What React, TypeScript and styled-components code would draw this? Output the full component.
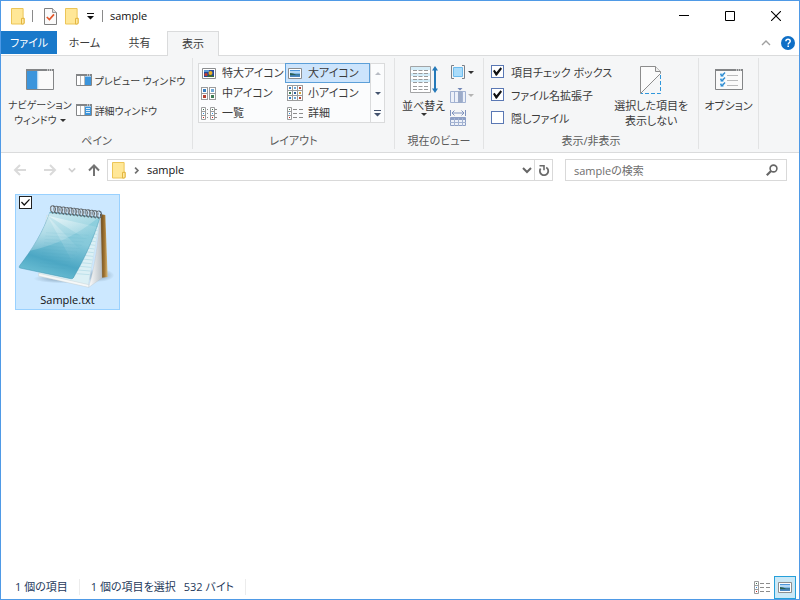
import React from "react";
import styled, { createGlobalStyle, css } from "styled-components";

const GlobalStyle = createGlobalStyle`
  *, *::before, *::after { box-sizing: border-box; }
  body { margin: 0; background: #fff; }
  body, button, input {
    font-family: "Open Sans", "Noto Sans CJK JP", sans-serif;
    font-size: 11px;
    font-feature-settings: "palt";
    color: #3b3b3b;
  }
  button { border: 0; padding: 0; background: none; }
  svg { display: block; flex: none; }
`;

const Window = styled.div`
  min-height: 100vh;
  display: flex;
  flex-direction: column;
  border: 1px solid #4f9ae6;
  background: #fff;
`;

/* ---------- title bar ---------- */
const TitleBar = styled.header`
  display: flex;
  align-items: center;
  gap: 11px;
  height: 30px;
  padding-left: 10px;
`;
const QuickAccess = styled.div<{ $gap: number }>`
  display: flex;
  align-items: center;
  gap: ${(p) => p.$gap}px;
`;
const QuickButton = styled.button`
  display: flex;
`;
const Divider = styled.span`
  width: 1px;
  height: 12px;
  background: #8a8a8a;
`;
const Title = styled.h1`
  margin: 0 auto 0 -4px;
  font-size: 11px;
  font-weight: 400;
  line-height: 16px;
  color: #111;
`;
const CaptionButtons = styled.div`
  display: flex;
`;
const CaptionButton = styled.button`
  width: 46px;
  height: 30px;
  display: grid;
  place-items: center;
`;

/* ---------- tabs ---------- */
const TabRow = styled.nav`
  display: flex;
  height: 24px;
  align-items: stretch;
`;
const Tab = styled.button<{ $kind?: "file" | "active" }>`
  min-width: 55px;
  padding: 0 7px;
  line-height: 22px;
  ${(p) =>
    p.$kind === "file" &&
    css`
      min-width: 56px;
      background: #1979ca;
      color: #fff;
      margin-bottom: 1px;
    `}
  ${(p) =>
    p.$kind === "active" &&
    css`
      position: relative;
      min-width: 52px;
      background: #f5f6f7;
      border: 1px solid #dadbdc;
      border-bottom: 0;
      margin-bottom: -1px;
    `}
`;
const TabTools = styled.div`
  margin-left: auto;
  padding-right: 4px;
  display: flex;
  align-items: center;
  gap: 10px;
`;

/* ---------- ribbon ---------- */
const Ribbon = styled.section`
  display: flex;
  padding: 2px 0 3px;
  background: #f5f6f7;
  border-top: 1px solid #dadbdc;
  border-bottom: 1px solid #dadbdc;
`;
const Group = styled.section<{ $basis: number }>`
  flex: 0 0 ${(p) => p.$basis}px;
  display: flex;
  flex-direction: column;
  border-right: 1px solid #e2e3e4;
`;
const GroupBody = styled.div<{ $inset?: number }>`
  display: flex;
  justify-content: ${(p) => (p.$inset ? "flex-start" : "center")};
  padding-left: ${(p) => p.$inset ?? 0}px;
  height: 75px;
`;
const GroupName = styled.h2`
  margin: 0;
  height: 16px;
  font-size: 11px;
  font-weight: 400;
  line-height: 16px;
  text-align: center;
  color: #5a5a5a;
`;
const BigButton = styled.button<{ $small?: boolean }>`
  display: flex;
  flex-direction: column;
  align-items: center;
  width: max-content;
  padding: 7px 0 0;
  font-size: ${(p) => (p.$small ? 10 : 11)}px;
  line-height: 15px;
  white-space: nowrap;
`;
const BigIcon = styled.span`
  height: 33px;
  display: flex;
  align-items: center;
  padding-bottom: 4px;
`;
const WithArrow = styled.span`
  display: flex;
  align-items: center;
  gap: 3px;
`;
const PaneColumn = styled.div`
  display: flex;
  flex-direction: column;
  gap: 10px;
  padding: 12px 0 0 4px;
`;
const PaneButton = styled.button`
  display: flex;
  align-items: center;
  gap: 3px;
  height: 20px;
  font-size: 10px;
  white-space: nowrap;
`;

const Gallery = styled.div`
  display: grid;
  grid-template-columns: 86px 85px 14px;
  margin-top: 5px;
  height: 60px;
  border: 1px solid #dadbdc;
  background: #fbfcfd;
`;
const GalleryColumn = styled.div`
  display: flex;
  flex-direction: column;
  margin-top: -1px;
`;
const GalleryItem = styled.button<{ $selected?: boolean }>`
  display: flex;
  align-items: center;
  gap: 5px;
  height: 20px;
  padding: 0 0 0 2px;
  line-height: 18px;
  white-space: nowrap;
  ${(p) =>
    p.$selected &&
    css`
      background: #cce4fc;
      outline: 1px solid #5c9fd8;
      outline-offset: -1px;
    `}
`;
const GalleryScroll = styled.div`
  display: grid;
  grid-template-rows: repeat(3, 1fr);
  border-left: 1px solid #dadbdc;
`;
const ScrollButton = styled.button`
  display: grid;
  place-items: center;
`;

const ViewTools = styled.div`
  display: flex;
  flex-direction: column;
  gap: 7px;
  padding: 6px 0 0 5px;
`;
const ToolButton = styled.button`
  display: flex;
  align-items: center;
  gap: 2px;
  height: 16px;
`;

const CheckList = styled.div`
  display: flex;
  flex-direction: column;
  padding: 2px 2px 0 0;
`;
const CheckLabel = styled.label`
  display: flex;
  align-items: center;
  gap: 7px;
  height: 23px;
  white-space: nowrap;
`;
const CheckBox = styled.input<{ $dark?: boolean }>`
  appearance: none;
  display: grid;
  place-items: center;
  width: 13px;
  height: 13px;
  margin: 0;
  border: 1px solid ${(p) => (p.$dark ? "#222" : "#5a78b4")};
  background: #fff;
  &:checked::before {
    content: "";
    width: 9px;
    height: 9px;
    background: #111;
    clip-path: ${(p) =>
      p.$dark
        ? "polygon(0 50%, 10% 40%, 36% 68%, 90% 10%, 100% 20%, 36% 88%)"
        : "polygon(0 45%, 18% 30%, 38% 58%, 84% 4%, 100% 20%, 42% 96%, 32% 96%)"};
  }
`;

/* ---------- address row ---------- */
const AddressRow = styled.div`
  display: flex;
  align-items: center;
  height: 34px;
  padding: 0 12px;
`;
const NavButton = styled.button<{ $space: number }>`
  display: flex;
  margin-right: ${(p) => p.$space}px;
`;
const AddressBox = styled.div`
  flex: 2;
  display: flex;
  align-items: center;
  height: 22px;
  border: 1px solid #d9d9d9;
  margin-right: 12px;
  padding-left: 4px;
`;
const Crumb = styled.button`
  display: flex;
  align-items: center;
  gap: 7px;
  margin-right: auto;
  line-height: 18px;
  color: #111;
`;
const DropButton = styled.button`
  width: 15px;
  display: grid;
  place-items: center;
`;
const Refresh = styled.button`
  width: 18px;
  align-self: stretch;
  display: grid;
  place-items: center;
  border-left: 1px solid #d9d9d9;
`;
const SearchBox = styled.label`
  flex: 1;
  display: flex;
  align-items: center;
  height: 22px;
  border: 1px solid #d9d9d9;
  svg {
    margin-right: 8px;
  }
`;
const SearchInput = styled.input`
  flex: 1;
  min-width: 0;
  border: 0;
  padding: 0 0 0 8px;
  outline: 0;
  background: none;
  &::placeholder {
    color: #6d6d6d;
    opacity: 1;
  }
`;

/* ---------- files ---------- */
const Files = styled.main`
  flex: 1;
  display: flex;
  flex-wrap: wrap;
  align-content: flex-start;
  padding: 7px 14px;
`;
const FileTile = styled.label`
  position: relative;
  display: flex;
  flex-direction: column;
  align-items: center;
  width: 105px;
  padding-top: 7px;
  border: 1px solid #99d1ff;
  background: #cce8ff;
`;
const TileCheck = styled.span`
  position: absolute;
  left: 3px;
  top: 1px;
`;
const FileName = styled.span`
  line-height: 19px;
  color: #111;
`;

/* ---------- status bar ---------- */
const StatusBar = styled.footer`
  display: flex;
  align-items: center;
  height: 24px;
  padding: 0 3px 0 14px;
  color: #1e395b;
`;
const StatusText = styled.span`
  display: flex;
  gap: 8px;
  line-height: 16px;
  padding-right: 11px;
  margin-right: 11px;
  border-right: 1px solid #ececec;
`;
const ViewSwitch = styled.div`
  display: flex;
  align-items: center;
  gap: 1px;
  margin-left: auto;
`;
const ViewButton = styled.button<{ $on?: boolean }>`
  display: grid;
  place-items: center;
  width: 22px;
  height: 23px;
  ${(p) =>
    p.$on &&
    css`
      border: 1px solid #26a0da;
      background: #cbe8f6;
    `}
`;

/* ---------- icons ---------- */
const FolderIcon = () => (
  <svg width="14" height="17" viewBox="0 0 14 17">
    <path d="M.5.5h11.6v9.6h1v5.4l-1 .5H.5z" fill="#ffe797" stroke="#ecc557" />
    <path d="M10.5 16v-5.6h2.6v5L12 16z" fill="#ffe9a2" stroke="#e3b640" />
  </svg>
);

const PropertiesIcon = () => (
  <svg width="13" height="17" viewBox="0 0 13 17">
    <path d="M.5.5h8l4 4v12H.5z" fill="#fafafa" stroke="#808080" />
    <path d="M8.5.5v4h4" fill="#ddd" stroke="#999" />
    <path d="M2.8 9l2.6 2.6L10 6.4" fill="none" stroke="#e2572b" strokeWidth="1.7" />
  </svg>
);

const Triangle = ({ color = "#333", up = false }: { color?: string; up?: boolean }) => (
  <svg width="6" height="3" viewBox="0 0 6 3">
    <path d={up ? "M0 3h6L3 0z" : "M0 0h6L3 3z"} fill={color} />
  </svg>
);

const BarTriangle = ({ color = "#333" }: { color?: string }) => (
  <svg width="7" height="7" viewBox="0 0 7 7">
    <path d="M0 0h7v1H0zM0 3h7L3.5 6.5z" fill={color} />
  </svg>
);

const PaneFrame = ({ children }: { children: React.ReactNode }) => (
  <svg width="28" height="21" viewBox="0 0 28 21">
    <path d="M.5.5h27v20H.5z" fill="#fafafa" stroke="#838587" />
    <path d="M0 0h28v2H0z" fill="#838587" />
    <path d="M21 1h1M23 1h1M25 1h1" stroke="#fff" />
    {children}
  </svg>
);

const SmallPane = ({ details }: { details?: boolean }) => (
  <svg width="16" height="12" viewBox="0 0 16 12">
    <path d="M.5.5h15v11H.5z" fill="#fff" stroke="#838587" />
    <path d="M0 0h16v2H0z" fill="#838587" />
    <path d="M11 1h1M13 1h1" stroke="#fff" />
    <path d="M4.5 2v9M8.5 2v9" stroke="#b9babb" />
    <path d="M9 2.5h6v8.5H9z" fill="#3c95dc" />
    {details && <path d="M10 4.5h4M10 6.5h4M10 8.5h4" stroke="#d6ebfb" />}
  </svg>
);

const PictureIcon = ({ scene }: { scene: "flowers" | "lake" }) => (
  <svg width="16" height="13" viewBox="0 0 16 13">
    <path d="M1.5 1.5h13v10h-13z" fill="#fff" stroke="#8b8d8f" />
    {scene === "flowers" ? (
      <>
        <path d="M3 3h10v7H3z" fill="#25489c" />
        <path d="M3 3h5v2H3z" fill="#5b9ad6" />
        <circle cx="5" cy="7.5" r="1.6" fill="#c8402c" />
        <circle cx="9.5" cy="6" r="2" fill="#eab021" />
        <path d="M6.500 8.500l3-.5L13 9v1H6.500z" fill="#3d6b32" />
      </>
    ) : (
      <>
        <path d="M3 3h10v7H3z" fill="#4f97dc" />
        <path d="M3 4h10v2.500H3z" fill="#b5d8f4" />
        <path d="M3 6l3 .5 3 1h4v1H3z" fill="#2b5f52" />
        <path d="M3 8.500h10V10H3z" fill="#4a86c2" />
      </>
    )}
  </svg>
);

const CellsIcon = ({ count }: { count: 2 | 3 }) => {
  const colours = ["#397fc2", "#70a9d8", "#b44232", "#3f7c55", "#2f609d", "#d7a334"];
  const w = count === 2 ? 7 : 5;
  const h = count === 2 ? 6 : 5;
  const tall = count === 2 ? 13 : 16;
  const inset = count === 2 ? 2 : 2;
  const cells = Array.from({ length: count * count }, (_, i) => i);
  return (
    <svg width="16" height={tall} viewBox={`0 0 16 ${tall}`}>
      {cells.map((i) => {
        const x = (i % count) * (w + (count === 2 ? 1 : 0));
        const y = Math.floor(i / count) * h;
        return (
          <g key={i}>
            <rect x={x + 0.5} y={y + 0.5} width={count === 2 ? 6 : 5} height={h} fill="#fff" stroke="#9b9c9d" />
            <rect x={x + inset} y={y + inset} width={count === 2 ? 3 : 2} height={count === 2 ? 3 : 2} fill={colours[i % 6]} />
          </g>
        );
      })}
    </svg>
  );
};

const ListIcon = ({ details }: { details?: boolean }) => (
  <svg width="16" height="13" viewBox="0 0 16 13">
    <path d="M.5.5h4v12h-4zM0 4.5h5M0 8.5h5" fill="#fff" stroke="#9b9c9d" />
    <path d="M2 2h1v1H2z" fill="#3f6f4f" />
    <path d="M2 6h1v1H2z" fill="#2f8fe0" />
    <path d="M2 10h1v1H2z" fill="#c5221f" />
    {details ? (
      <path d="M6 2.5h4M6 6.5h4M6 10.5h4M12 2.5h4M12 6.5h4M12 10.5h4" stroke="#8c8c8c" />
    ) : (
      <>
        <path d="M6 2.5h1M6 6.5h1M6 10.5h1M14 2.5h2M14 6.5h2M14 10.5h2" stroke="#8c8c8c" />
        <path d="M9.5.5h4v12h-4zM9 4.5h5M9 8.5h5" fill="#fff" stroke="#9b9c9d" />
        <path d="M11 2h1v1h-1z" fill="#3f6f4f" />
        <path d="M11 6h1v1h-1z" fill="#2f8fe0" />
        <path d="M11 10h1v1h-1z" fill="#c5221f" />
      </>
    )}
  </svg>
);

const SortIcon = () => (
  <svg width="28" height="27" viewBox="0 0 28 27">
    <path d="M.5.5h20v26H.5z" fill="#fff" stroke="#a3a4a5" />
    <path d="M1 1h19v3H1zM1 7h19v3H1zM1 13h19v3H1z" fill="#d4edf9" />
    <path
      d="M3 4.5h15M3 7.5h15M3 10.500h15M3 13.5h15M3 16.500h15M3 20.500h15M3 23.500h15"
      stroke="#9a9b9c"
      strokeDasharray="4 1.5"
    />
    <path d="M25 3v21" stroke="#2479b9" strokeWidth="2" />
    <path d="M22 4.5L25 0l3 4.5zM22 22.5L25 27l3-4.5z" fill="#2479b9" />
  </svg>
);

const GroupByIcon = () => (
  <svg width="16" height="14" viewBox="0 0 16 14">
    <path d="M4 .5H1.5v13H4M12 .5h2.5v13H12" fill="none" stroke="#7b8088" />
    <path d="M3.5 2.5h9v9h-9z" fill="#a9dcfb" stroke="#6dbbed" />
  </svg>
);

const AddColumnIcon = () => (
  <svg width="16" height="16" viewBox="0 0 16 16">
    <path d="M.5 4.5h15v11H.5z" fill="#edf1f9" stroke="#a3b3d2" />
    <path d="M4.5 4.5v11M12.5 4.5v11" stroke="#a3b3d2" />
    <path d="M8 4h4v12H8z" fill="#9dacc9" />
    <path d="M7.5 1h5L10 3.5z" fill="#7187b6" />
  </svg>
);

const FitColumnsIcon = () => (
  <svg width="16" height="16" viewBox="0 0 16 16">
    <path d="M.5 0v6M15.5 0v6M2 3h12M4.5.5L2 3l2.5 2.5M11.5.5L14 3l-2.5 2.5" fill="none" stroke="#7e92bd" />
    <path d="M.5 7.5h15v8H.5z" fill="#edf1f9" stroke="#8d9fc5" />
    <path d="M0 9h16" stroke="#8d9fc5" strokeWidth="2" />
    <path d="M4.5 8v8M8.5 8v8M12.5 8v8M0 12.5h16" stroke="#a3b3d2" />
  </svg>
);

const HideIcon = () => (
  <svg width="22" height="28" viewBox="0 0 22 28">
    <path d="M.5 27.5V.5h15l5 5v2z" fill="#fbfbfb" stroke="#8c8c8c" />
    <path d="M15.5.5v5h5" fill="#eee" stroke="#8c8c8c" />
    <path d="M20.5 9v18.5H1" fill="none" stroke="#2f97dc" strokeDasharray="4 2" />
  </svg>
);

const OptionRows = () => (
  <>
    {[5, 10, 15].map((y) => (
      <g key={y}>
        <path d={`M5 ${y - 1}h4v4H5z`} fill="#c5e4f8" />
        <path d={`M5.5 ${y}l1.5 2 3-3.5`} fill="none" stroke="#2f8bd0" strokeWidth="1.3" />
        <path d={`M12 ${y + 1.5}h11`} stroke="#b9babb" />
      </g>
    ))}
  </>
);

const Arrow = ({ turn, color }: { turn: "left" | "right" | "up"; color: string }) => {
  const paths = {
    left: "M13 7H2M7 2L2 7l5 5",
    right: "M1 7h11M7 2l5 5-5 5",
    up: "M7 13V2.5M2 7.5l5-5 5 5",
  };
  return (
    <svg width="14" height="14" viewBox="0 0 14 14">
      <path d={paths[turn]} fill="none" stroke={color} strokeWidth="2" />
    </svg>
  );
};

const Chevron = ({ d, color, size, weight }: { d: string; color: string; size: number; weight: number }) => (
  <svg width={size} height={size} viewBox="0 0 10 10">
    <path d={d} fill="none" stroke={color} strokeWidth={weight} />
  </svg>
);

const RefreshIcon = () => (
  <svg width="12" height="13" viewBox="0 0 12 13">
    <path d="M8.2 3.4A4.200 4.200 0 1 1 2.600 4.600" fill="none" stroke="#6b6b6b" strokeWidth="1.8" />
    <path d="M1.500 1.800H6v4.500" fill="none" stroke="#6b6b6b" strokeWidth="1.6" />
  </svg>
);

const SearchIcon = () => (
  <svg width="12" height="12" viewBox="0 0 12 12">
    <circle cx="7.5" cy="4.5" r="3.4" fill="none" stroke="#666" strokeWidth="1.6" />
    <path d="M5 7L.8 11.2" stroke="#666" strokeWidth="2.2" />
  </svg>
);

const HelpIcon = () => (
  <svg width="14" height="14" viewBox="0 0 14 14">
    <circle cx="7" cy="7" r="7" fill="#0f6fc6" />
    <path d="M4.9 5.3c0-1.4 1-2 2.1-2 1.2 0 2.2.7 2.2 1.9 0 1.5-2 1.6-2 3.2" fill="none" stroke="#fff" strokeWidth="1.5" />
    <path d="M6.4 9.6H8v1.5H6.4z" fill="#fff" />
  </svg>
);

const NotepadIcon = () => {
  const rings = Array.from({ length: 14 }, (_, i) => i);
  const lines = Array.from({ length: 14 }, (_, i) => i);
  return (
    <svg width="100" height="88" viewBox="54 50 300 264">
      <defs>
        <linearGradient id="cover" x1="0.7" y1="0" x2="0.35" y2="1">
          <stop offset="0" stopColor="#8fd0de" />
          <stop offset="0.4" stopColor="#86c9da" />
          <stop offset="0.75" stopColor="#4ca7c4" />
          <stop offset="1" stopColor="#6dbfd4" />
        </linearGradient>
        <linearGradient id="shine" x1="0" y1="0" x2="0.8" y2="1">
          <stop offset="0" stopColor="#fff" stopOpacity="0.9" />
          <stop offset="0.9" stopColor="#fff" stopOpacity="0" />
        </linearGradient>
        <linearGradient id="board" x1="0" y1="0" x2="1" y2="0">
          <stop offset="0" stopColor="#5d3f15" />
          <stop offset="0.6" stopColor="#a47835" />
          <stop offset="1" stopColor="#d9bb7b" />
        </linearGradient>
        <linearGradient id="edge" x1="0" y1="0" x2="1" y2="0">
          <stop offset="0" stopColor="#fff" />
          <stop offset="1" stopColor="#b9c0c5" />
        </linearGradient>
        <radialGradient id="shade">
          <stop offset="0" stopColor="#4c6880" stopOpacity="0.6" />
          <stop offset="1" stopColor="#4c6880" stopOpacity="0" />
        </radialGradient>
      </defs>
      <ellipse cx="295" cy="270" rx="48" ry="20" fill="url(#shade)" />
      <ellipse cx="190" cy="280" rx="90" ry="14" fill="url(#shade)" />
      <path d="M300 86l16 3 7 186-18 2z" fill="url(#board)" />
      <path d="M140 90l162 4-38 210-148-32z" fill="#dcf0f5" stroke="#c6d2d7" />
      {lines.map((i) => (
        <path key={i} d={`M${282 - i * 4} ${122 + i * 11}l${13 + i * 2} 3`} stroke="#9fd0de" strokeWidth="1.5" />
      ))}
      <path d="M302 92l4 186-40 28c18-60 28-130 34-208z" fill="url(#edge)" stroke="#b8bfc3" />
      <path d="M116 264l150 34v8l-150-34z" fill="#f6f8f8" stroke="#bcc5c9" />
      <path d="M150 80l150 16c-20 66-46 122-78 178-2 5-5 7-10 6L60 248c-3-1-3-3-1-7 38-50 70-100 91-161z" fill="url(#cover)" stroke="#3e95b2" strokeWidth="1.5" />
      <path d="M146 92l148 34-22 44z" fill="url(#shine)" opacity="0.6" />
      <path d="M144 94l108 112-28 36z" fill="url(#shine)" opacity="0.35" />
      <path d="M148 84c-14 42-34 78-58 112 60-12 120-36 180-80l24-18z" fill="url(#shine)" opacity="0.75" />
      {lines.slice(0, 11).map((i) => (
        <path key={i} d={`M${138 - i * 2} ${142 + i * 10}l${128 - i * 5} 8`} stroke="#3f9db8" opacity="0.2" />
      ))}
      {rings.map((i) => (
        <g key={i} fill="none">
          <path d={`M${160 + i * 10.600} ${84 + i * 1.200}c-11-7-11-24 0-22 8 2 8 12 3 20`} stroke="#5f6970" strokeWidth="4" />
          <path d={`M${156 + i * 10.600} ${78 + i * 1.200}c-5-7-3-15 3-15`} stroke="#e8edf0" strokeWidth="2" />
        </g>
      ))}
    </svg>
  );
};

const CheckOption = ({ text, on }: { text: string; on?: boolean }) => (
  <CheckLabel>
    <CheckBox type="checkbox" defaultChecked={on} />
    {text}
  </CheckLabel>
);

export default function App() {
  return (
    <Window>
      <GlobalStyle />
      <TitleBar>
        <QuickAccess $gap={7}>
          <FolderIcon />
          <Divider />
        </QuickAccess>
        <QuickAccess $gap={8}>
          <QuickButton aria-label="プロパティ"><PropertiesIcon /></QuickButton>
          <QuickButton aria-label="新しいフォルダー"><FolderIcon /></QuickButton>
          <QuickButton aria-label="クイック アクセス"><BarTriangle color="#111" /></QuickButton>
          <Divider />
        </QuickAccess>
        <Title>sample</Title>
        <CaptionButtons>
          <CaptionButton aria-label="最小化">
            <svg width="10" height="10" viewBox="0 0 10 10"><path d="M0 4.5h10" stroke="#000" /></svg>
          </CaptionButton>
          <CaptionButton aria-label="最大化">
            <svg width="10" height="10" viewBox="0 0 10 10"><path d="M.5.5h9v9h-9z" fill="none" stroke="#000" /></svg>
          </CaptionButton>
          <CaptionButton aria-label="閉じる">
            <svg width="10" height="10" viewBox="0 0 10 10"><path d="M0 0l10 10M10 0L0 10" stroke="#000" strokeWidth="1.1" /></svg>
          </CaptionButton>
        </CaptionButtons>
      </TitleBar>

      <TabRow>
        <Tab $kind="file">ファイル</Tab>
        <Tab>ホーム</Tab>
        <Tab>共有</Tab>
        <Tab $kind="active">表示</Tab>
        <TabTools>
          <QuickButton aria-label="リボンの最小化">
            <Chevron d="M1 7l4-4 4 4" color="#a0a0a0" size={10} weight={1.4} />
          </QuickButton>
          <QuickButton aria-label="ヘルプ"><HelpIcon /></QuickButton>
        </TabTools>
      </TabRow>

      <Ribbon>
        <Group $basis={192}>
          <GroupBody $inset={7}>
            <BigButton $small>
              <BigIcon>
                <PaneFrame><path d="M1 2h10.5v18H1z" fill="#3c95dc" /><path d="M12 2v18" stroke="#d7e9f7" /></PaneFrame>
              </BigIcon>
              <span>ナビゲーション</span>
              <WithArrow>ウィンドウ<Triangle /></WithArrow>
            </BigButton>
            <PaneColumn>
              <PaneButton><SmallPane />プレビュー ウィンドウ</PaneButton>
              <PaneButton><SmallPane details />詳細ウィンドウ</PaneButton>
            </PaneColumn>
          </GroupBody>
          <GroupName>ペイン</GroupName>
        </Group>

        <Group $basis={202}>
          <GroupBody $inset={5}>
            <Gallery>
              <GalleryColumn>
                <GalleryItem><PictureIcon scene="flowers" />特大アイコン</GalleryItem>
                <GalleryItem><CellsIcon count={2} />中アイコン</GalleryItem>
                <GalleryItem><ListIcon />一覧</GalleryItem>
              </GalleryColumn>
              <GalleryColumn>
                <GalleryItem $selected><PictureIcon scene="lake" />大アイコン</GalleryItem>
                <GalleryItem><CellsIcon count={3} />小アイコン</GalleryItem>
                <GalleryItem><ListIcon details />詳細</GalleryItem>
              </GalleryColumn>
              <GalleryScroll>
                <ScrollButton aria-label="上へ"><Triangle up color="#b8bcc4" /></ScrollButton>
                <ScrollButton aria-label="下へ"><Triangle color="#44546f" /></ScrollButton>
                <ScrollButton aria-label="その他"><BarTriangle color="#44546f" /></ScrollButton>
              </GalleryScroll>
            </Gallery>
          </GroupBody>
          <GroupName>レイアウト</GroupName>
        </Group>

        <Group $basis={89}>
          <GroupBody $inset={7}>
            <BigButton>
              <BigIcon><SortIcon /></BigIcon>
              <span>並べ替え</span>
              <Triangle />
            </BigButton>
            <ViewTools>
              <ToolButton aria-label="グループ化"><GroupByIcon /><Triangle /></ToolButton>
              <ToolButton aria-label="列の追加"><AddColumnIcon /><Triangle color="#b4b4b4" /></ToolButton>
              <ToolButton aria-label="列のサイズを変更"><FitColumnsIcon /></ToolButton>
            </ViewTools>
          </GroupBody>
          <GroupName>現在のビュー</GroupName>
        </Group>

        <Group $basis={215}>
          <GroupBody $inset={7}>
            <CheckList>
              <CheckOption text="項目チェック ボックス" on />
              <CheckOption text="ファイル名拡張子" on />
              <CheckOption text="隠しファイル" />
            </CheckList>
            <BigButton>
              <BigIcon><HideIcon /></BigIcon>
              <span>選択した項目を</span>
              <span>表示しない</span>
            </BigButton>
          </GroupBody>
          <GroupName>表示/非表示</GroupName>
        </Group>

        <Group $basis={60}>
          <GroupBody>
            <BigButton>
              <BigIcon><PaneFrame><OptionRows /></PaneFrame></BigIcon>
              <span>オプション</span>
            </BigButton>
          </GroupBody>
        </Group>
      </Ribbon>

      <AddressRow>
        <NavButton $space={16} aria-label="戻る"><Arrow turn="left" color="#dadada" /></NavButton>
        <NavButton $space={11} aria-label="進む"><Arrow turn="right" color="#dadada" /></NavButton>
        <NavButton $space={11} aria-label="最近表示した場所"><Chevron d="M1 3l4 4 4-4" color="#d0d0d0" size={8} weight={2} /></NavButton>
        <NavButton $space={6} aria-label="上へ"><Arrow turn="up" color="#737373" /></NavButton>
        <AddressBox>
          <Crumb>
            <FolderIcon />
            <Chevron d="M3 1l4 4-4 4" color="#707070" size={7} weight={2.4} />
            sample
          </Crumb>
          <DropButton aria-label="以前の場所"><Chevron d="M1 3l4 4 4-4" color="#666" size={10} weight={2} /></DropButton>
          <Refresh aria-label="更新"><RefreshIcon /></Refresh>
        </AddressBox>
        <SearchBox>
          <SearchInput type="text" placeholder="sampleの検索" aria-label="sampleの検索" />
          <SearchIcon />
        </SearchBox>
      </AddressRow>

      <Files>
        <FileTile>
          <TileCheck><CheckBox $dark type="checkbox" defaultChecked /></TileCheck>
          <NotepadIcon />
          <FileName>Sample.txt</FileName>
        </FileTile>
      </Files>

      <StatusBar>
        <StatusText>1 個の項目</StatusText>
        <StatusText><span>1 個の項目を選択</span><span>532 バイト</span></StatusText>
        <ViewSwitch>
          <ViewButton aria-label="詳細表示"><ListIcon details /></ViewButton>
          <ViewButton $on aria-label="大アイコン表示"><PictureIcon scene="lake" /></ViewButton>
        </ViewSwitch>
      </StatusBar>
    </Window>
  );
}
